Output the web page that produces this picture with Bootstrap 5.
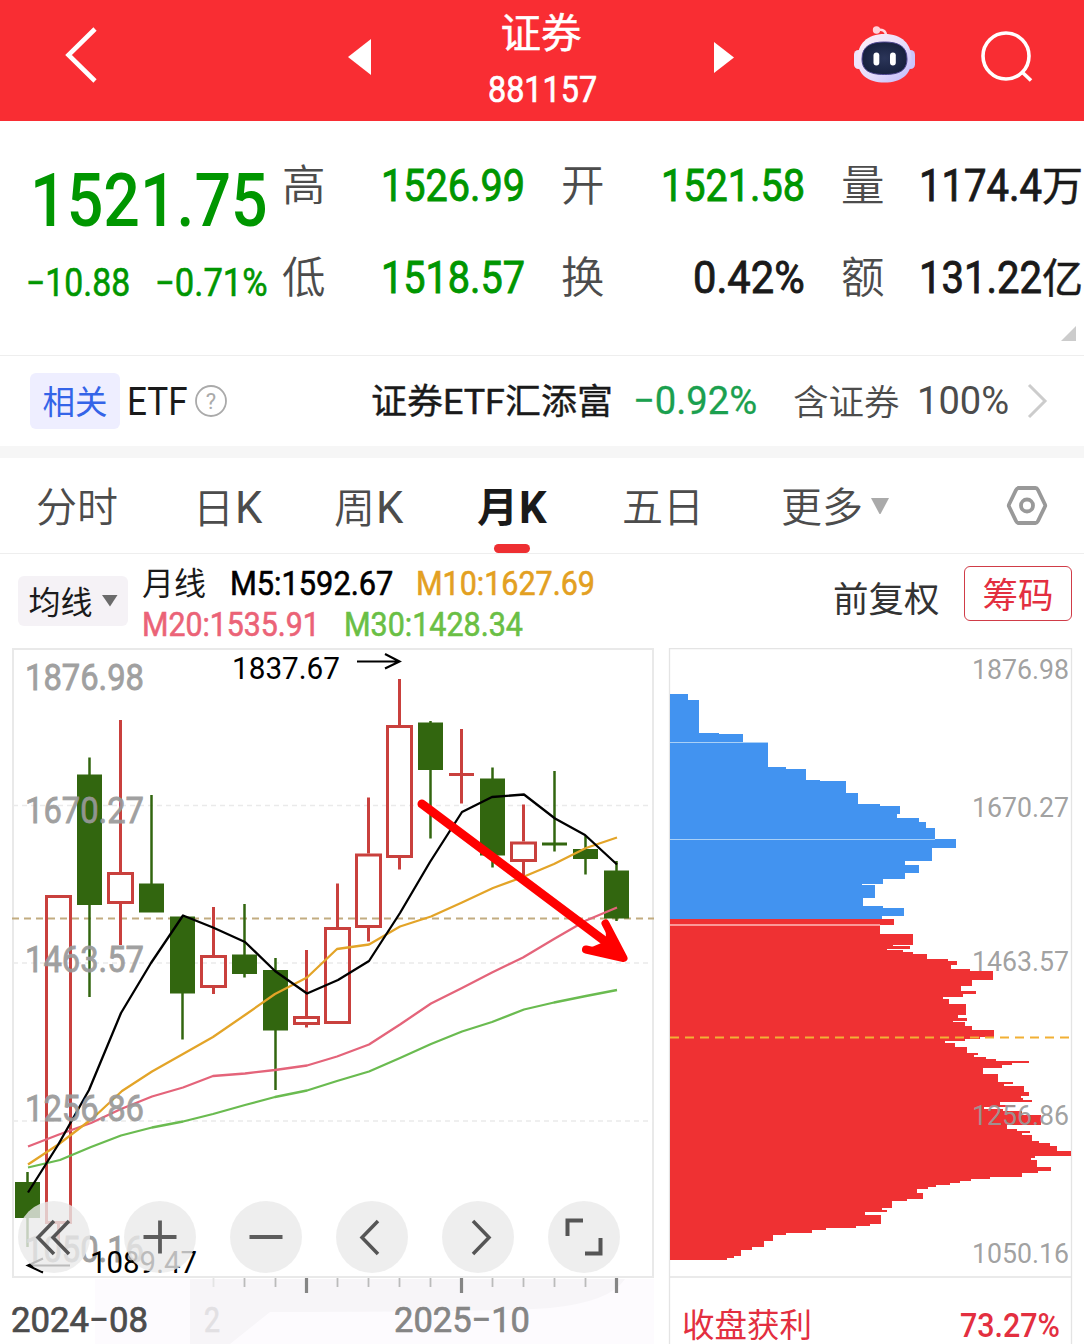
<!DOCTYPE html>
<html lang="zh-CN">
<head>
<meta charset="utf-8">
<meta name="viewport" content="width=device-width, initial-scale=1">
<title>证券 881157</title>
<link href="https://cdn.jsdelivr.net/npm/bootstrap@5.3.0/dist/css/bootstrap.min.css" rel="stylesheet">
<style>
body{font-family:Roboto,"Noto Sans CJK SC",sans-serif;color:#1a1a1a;background:#fff;width:1084px;height:1344px;overflow:hidden;line-height:1}
.topbar{height:121px;background:#f92d33;color:#fff;padding-left:65px}
.topbar svg{flex:none}
.title-box{width:343px;padding-top:13px}
.title-name{font-size:40.5px;line-height:43px;font-weight:400;-webkit-text-stroke:.5px;padding-right:3px}
.title-code{font-size:36.5px;line-height:40px;font-weight:400;-webkit-text-stroke:.7px;margin-top:14px}
.fit{display:inline-block;white-space:nowrap;text-align:left;flex:none}
.fit>span{display:inline-block;transform-origin:0 50%}
.dn{color:#009600}
.quote{height:234px;padding-top:19px}
.price-col{width:282px;padding-left:30px}
.price-big{font-size:75px;line-height:90px;font-weight:500;margin-top:15px}
.price-sub{font-size:38px;line-height:46px;margin-left:-4px;margin-top:15px;-webkit-text-stroke:.6px}
.stat-col{margin-right:36px}
.stat-line{height:92px;font-size:44.6px}
.stat-line .fit{-webkit-text-stroke:.9px}
.stat-key{font-size:43.5px;font-weight:350;color:#4c4c4c;padding-top:2px}
.stat-unit{font-size:41px;padding-top:2px;-webkit-text-stroke:.5px}
.corner{right:8px;bottom:14px}
.etf{height:91px;border-top:1px solid #eee;padding-left:30px;font-size:35.5px}
.rel{width:90px;height:56px;border-radius:6px;background:#eeeeff;color:#3464e8;font-size:32.5px;font-weight:400;padding-top:4px}
.band{height:12px;background:#f6f6f6}
.ktabs{height:96px;border-bottom:1px solid #eee;font-size:41px;color:#4c4c4c;font-weight:350;padding-left:36px}
.ktabs>div{flex:none;padding-top:6px}
.lat-k{font-size:43.5px;font-weight:400;margin-left:1px}
.ktab-on{color:#1a1a1a;font-weight:700}
.ktab-on .lat-k{font-weight:700}
.ktab-on::after{content:"";position:absolute;left:17px;bottom:0;width:36px;height:9px;border-radius:5px;background:#ee2f32}
.legend-row{height:94px;padding-left:18px}
.ma-btn{width:110px;height:50px;border-radius:6px;background:#f5f2f6;font-size:32px;margin-top:22px;padding-top:3px}
.ma-line{height:41px;font-size:33px}
.ma-line .fit{-webkit-text-stroke:.6px}
.adj{font-size:35.5px;line-height:50px;margin-top:21px;width:106px;color:#333;white-space:nowrap}
.chip{width:108px;height:55px;border:1px solid #d03c48;border-radius:6px;color:#e32f40;font-size:35.5px;margin-top:12px;padding-top:6px}
.k-panel{width:660px;height:696px}
.c-panel{width:424px;height:696px}
.k-panel>svg,.c-panel>svg{display:block}
.tools{left:18px;top:553px;gap:34px}
.tool{width:72px;height:72px;background:rgba(234,234,234,.8);border-radius:50%}
svg text{font-family:Roboto,"Noto Sans CJK SC",sans-serif}
.axis-l text{stroke:#999;stroke-width:.8px}
.dates text{stroke:currentColor;stroke-width:.7px;fill:currentColor}
</style>
<script src="https://cdn.jsdelivr.net/npm/bootstrap@5.3.0/dist/js/bootstrap.bundle.min.js"></script>
</head>
<body>
<header class="topbar d-flex">
  <svg width="33" height="121" fill="none" stroke="#fff" stroke-width="4.6"><path d="M30 29L3.500 55L30 81"/></svg>
  <svg width="23" height="121" style="margin-left:250px"><path d="M0 57L23 39V75Z" fill="#fff"/></svg>
  <div class="title-box text-center">
    <div class="title-name">证券</div>
    <div class="title-code"><span class="fit" data-w="109">881157</span></div>
  </div>
  <svg width="20" height="121"><path d="M0 42L20 57.500L0 73Z" fill="#fff"/></svg>
  <svg width="62" height="121" style="margin-left:120px" viewBox="0 0 62 121">
    <defs><linearGradient id="rb" x1="0" y1="0" x2="1" y2="1"><stop offset="0" stop-color="#fff0f6"/><stop offset=".55" stop-color="#e6dcfb"/><stop offset="1" stop-color="#bdb8fa"/></linearGradient>
    <radialGradient id="rf"><stop offset="0" stop-color="#2b3559"/><stop offset="1" stop-color="#18213f"/></radialGradient></defs>
    <path d="M32 36C32 30 28 29.500 24 30" fill="none" stroke="#ffd9e2" stroke-width="2.500"/><circle cx="22.500" cy="30" r="3.700" fill="#ffd3dc"/>
    <rect x="0" y="50" width="9" height="19" rx="4.500" fill="#eee5fd"/><rect x="52" y="50" width="9" height="19" rx="4.500" fill="#cbc5fb"/>
    <path d="M30.500 34C48 34 57.500 44 57.500 59C57.500 75 47 82.500 30.500 82.500S3.500 75 3.500 59C3.500 44 13 34 30.500 34Z" fill="url(#rb)"/>
    <path d="M30.500 42C44 42 53 46 53 59C53 70 46 74.500 30.500 74.500S8 70 8 59C8 46 17 42 30.500 42Z" fill="url(#rf)" stroke="#4c4590" stroke-width="1"/>
    <rect x="19.500" y="52.500" width="5.800" height="13" rx="2.900" fill="#fff"/><rect x="36" y="52.500" width="5.800" height="13" rx="2.900" fill="#fff"/>
  </svg>
  <svg width="54" height="121" style="margin-left:64px" fill="none" stroke="#fff" stroke-width="3.600"><circle cx="26" cy="56" r="23"/><path d="M42 72L51 80.500"/></svg>
</header>

<section class="quote d-flex position-relative">
  <div class="price-col">
    <div class="price-big dn"><span class="fit" data-w="238">1521.75</span></div>
    <div class="price-sub dn d-flex"><span class="fit" data-w="104">−10.88</span><span class="fit" data-w="113" style="margin-left:25px">−0.71%</span></div>
  </div>
  <div class="stat-col" style="width:243px">
    <div class="stat-line d-flex align-items-center justify-content-between"><span class="stat-key">高</span><span class="fit dn" data-w="144">1526.99</span></div>
    <div class="stat-line d-flex align-items-center justify-content-between"><span class="stat-key">低</span><span class="fit dn" data-w="144">1518.57</span></div>
  </div>
  <div class="stat-col" style="width:244px">
    <div class="stat-line d-flex align-items-center justify-content-between"><span class="stat-key">开</span><span class="fit dn" data-w="144">1521.58</span></div>
    <div class="stat-line d-flex align-items-center justify-content-between"><span class="stat-key">换</span><span class="fit" data-w="112">0.42%</span></div>
  </div>
  <div style="width:242px">
    <div class="stat-line d-flex align-items-center justify-content-between"><span class="stat-key">量</span><span class="d-flex align-items-center"><span class="fit" data-w="123">1174.4</span><span class="stat-unit">万</span></span></div>
    <div class="stat-line d-flex align-items-center justify-content-between"><span class="stat-key">额</span><span class="d-flex align-items-center"><span class="fit" data-w="123">131.22</span><span class="stat-unit">亿</span></span></div>
  </div>
  <svg class="corner position-absolute" width="15" height="15"><path d="M15 0V15H0Z" fill="#ccc"/></svg>
</section>

<section class="etf d-flex align-items-center">
  <div class="rel d-flex align-items-center justify-content-center">相关</div>
  <span class="fit" data-w="61" style="margin-left:7px;font-size:38px;padding-top:2px">ETF</span>
  <svg width="32" height="34" style="margin-left:7px"><circle cx="16" cy="17" r="15" fill="none" stroke="#aaa" stroke-width="1.800"/><text x="16" y="24.500" font-size="22" text-anchor="middle" fill="#aaa">?</text></svg>
  <span class="fit" data-w="242" style="margin-left:144px;-webkit-text-stroke:.4px;padding-top:4px">证券ETF汇添富</span>
  <span class="fit" data-w="124" style="margin-left:20px;font-size:38.500px;color:#1ba04f;-webkit-text-stroke:.3px">−0.92%</span>
  <span style="margin-left:36px;color:#4c4c4c;font-weight:350;padding-top:5px">含证券</span>
  <span class="fit" data-w="92" style="margin-left:17px;font-size:38.500px;color:#4c4c4c">100%</span>
  <svg width="22" height="36" style="margin-left:17px" fill="none" stroke="#ccc" stroke-width="3"><path d="M3 2L19 18L3 34"/></svg>
</section>
<div class="band"></div>

<nav class="ktabs d-flex align-items-center">
  <div style="width:157px">分时</div>
  <div style="width:141px">日<span class="lat-k">K</span></div>
  <div style="width:143px">周<span class="lat-k">K</span></div>
  <div class="ktab-on position-relative h-100 d-flex align-items-center" style="width:145px">月<span class="lat-k">K</span></div>
  <div style="width:159px">五日</div>
  <div class="d-flex align-items-center" style="width:225px">更多<svg width="19" height="17" style="margin-left:8px;margin-top:-5px"><path d="M0 0H18L9.500 16H8.500Z" fill="#aaa"/></svg></div>
  <svg width="42" height="42" fill="none" stroke="#999" stroke-width="3.800"><path d="M12.500 3H29.500Q31 3 32 5L39 19.500Q39.500 20.500 39 21.500L32 36Q31 38 29.500 38H12.500Q11 38 10 36L3 21.500Q2.500 20.500 3 19.500L10 5Q11 3 12.500 3Z"/><circle cx="21" cy="20.500" r="6"/></svg>
</nav>

<section class="legend-row d-flex">
  <div class="ma-btn d-flex align-items-center justify-content-center">均线<svg width="16" height="12" style="margin-left:9px;margin-top:-3px"><path d="M0 0H15.500L8 11.500Z" fill="#6b6b6b"/></svg></div>
  <div style="width:705px;margin-left:14px;padding-top:9px">
    <div class="ma-line d-flex align-items-center"><span style="font-size:32px;font-weight:400">月线</span><span class="fit" data-w="163" style="margin-left:24px;color:#000">M5:1592.67</span><span class="fit" data-w="179" style="margin-left:23px;color:#e3a021">M10:1627.69</span></div>
    <div class="ma-line d-flex align-items-center"><span class="fit" data-w="178" style="color:#eb6377">M20:1535.91</span><span class="fit" data-w="179" style="margin-left:24px;color:#6abf45">M30:1428.34</span></div>
  </div>
  <div class="d-flex flex-shrink-0" style="margin-left:-14px">
    <span class="adj">前复权</span>
    <div class="chip d-flex align-items-center justify-content-center" style="margin-left:25px">筹码</div>
  </div>
</section>

<main class="d-flex">
  <div class="k-panel position-relative">
    <svg width="660" height="696" viewBox="0 648 660 696">
      <rect x="12" y="1279" width="642" height="65" fill="#fdfbfe"/>
      <path d="M190 1279H625Q610 1302 550 1308Q500 1312 270 1312L230 1344H190Z" fill="#f7f5f8"/><rect x="12" y="1279" width="83" height="65" fill="#fff"/>
      <rect x="13" y="649" width="640" height="628" fill="none" stroke="#e9e9e9" stroke-width="2"/>
      <g stroke="#eaeaea" stroke-width="1.500" stroke-dasharray="5 4"><path d="M13 805.500H653M13 963H653M13 1121H653"/></g>
      <path d="M12 918.500H654" stroke="#c2ac80" stroke-width="1.800" stroke-dasharray="7 5"/>
      <g id="candles"></g>
      <g fill="none" stroke-width="2.300" stroke-linejoin="round">
        <polyline stroke="#6abb50" points="28,1167.500 60,1160 91,1147 121,1135.500 152,1127.500 183,1121.500 213,1114 245,1105 275,1097 307,1090.500 337,1081 369,1071.500 400,1058 431,1044 462,1031.500 492,1022 524,1009.500 554,1002.500 586,996 617,990"/>
        <polyline stroke="#e4647a" points="28,1146.500 59,1134.500 91,1123 121,1109 152,1096.500 183,1087.500 213,1076 245,1073.500 275,1070 307,1065.500 337,1056.500 369,1044.500 400,1024.500 431,1003.500 462,988 492,972.500 523,957.500 554,939 586,920.500 617,907.500"/>
        <polyline stroke="#e3a428" points="28,1164.500 59,1144 93,1118 122,1091 152,1071.500 183,1054 213,1037 245,1015 275,994 307,977.500 337,949 369,944.500 400,926.500 431,916.500 462,902.500 493,888 523,877 554,864 586,848 617,837.500"/>
        <polyline stroke="#000" points="28,1192.500 58,1145 89,1090 121,1013 151,963 183,915.500 213,927.500 245,942 275,971 307,993.500 338,980 369,961 400,913 430,862 462,812 492,797 524,794.500 555,818.500 585,835 617,864.500"/>
      </g>
      <g class="axis-l" font-size="36" fill="#999" opacity=".93">
        <text x="25" y="690" textLength="119" lengthAdjust="spacingAndGlyphs">1876.98</text>
        <text x="25" y="823" textLength="119" lengthAdjust="spacingAndGlyphs">1670.27</text>
        <text x="25" y="972" textLength="119" lengthAdjust="spacingAndGlyphs">1463.57</text>
        <text x="25" y="1121" textLength="119" lengthAdjust="spacingAndGlyphs">1256.86</text>
        <text x="25" y="1262" textLength="119" lengthAdjust="spacingAndGlyphs">1050.16</text>
      </g>
      <g font-size="31" fill="#000">
        <text x="232" y="679" textLength="108" lengthAdjust="spacingAndGlyphs">1837.67</text>
        <text x="90" y="1273" textLength="107" lengthAdjust="spacingAndGlyphs">1089.47</text>
      </g>
      <g fill="none" stroke="#000" stroke-width="2.200"><path d="M357 661.500H399M385 654L399.500 661.500L385 668.500"/><path d="M70 1265.500H29M43 1258.500L28 1265.500L43 1272.500"/></g>
      <g stroke="#f00" stroke-linecap="round" stroke-linejoin="round" fill="#f00"><path d="M422 804L610 945" stroke-width="9"/><path d="M605.500 923.500L623.500 958L586 949.500" fill="none" stroke-width="8"/><path d="M605.500 923L624 958L586 949.500L606 941Z" stroke="none"/></g>
      <g id="ticks"></g>
      <g class="dates" font-size="35.500">
        <text x="11" y="1332" textLength="137" lengthAdjust="spacingAndGlyphs" color="#4c4c4c">2024−08</text>
        <text x="204" y="1332" textLength="16" lengthAdjust="spacingAndGlyphs" color="#e2e0e3">2</text>
        <text x="394" y="1332" textLength="136" lengthAdjust="spacingAndGlyphs" color="#858585">2025−10</text>
      </g>
    </svg>
    <div class="tools position-absolute d-flex">
      <div class="tool"><svg width="72" height="72" fill="none" stroke="#555" stroke-width="3.500"><path d="M36 20L20 36.500L36 53M51 20L35 36.500L51 53"/></svg></div>
      <div class="tool"><svg width="72" height="72" fill="none" stroke="#5c5c5c" stroke-width="3.800"><path d="M19.500 36H52.500M36 19.500V52.500"/></svg></div>
      <div class="tool"><svg width="72" height="72" fill="none" stroke="#5c5c5c" stroke-width="3.800"><path d="M19.500 36H52.500"/></svg></div>
      <div class="tool"><svg width="72" height="72" fill="none" stroke="#555" stroke-width="3.500"><path d="M42 20L26 36.500L42 53"/></svg></div>
      <div class="tool"><svg width="72" height="72" fill="none" stroke="#555" stroke-width="3.500"><path d="M31 20L47 36.500L31 53"/></svg></div>
      <div class="tool"><svg width="72" height="72" fill="none" stroke="#555" stroke-width="4"><path d="M35 19.500H19.500V35M37 52.500H52.500V37"/></svg></div>
    </div>
  </div>
  <div class="c-panel">
    <svg width="424" height="696" viewBox="660 648 424 696">
      <path d="M669.500 1344V648.500H1071.500V1344M670 1277H1071" fill="none" stroke="#e4e4e4" stroke-width="1.300"/>
      <g id="chips" shape-rendering="crispEdges"></g>
      <path d="M670 742.500H768M670 839.500H935" stroke="#a9d0f7" stroke-width="1"/><path d="M670 925H880" stroke="#fbb" stroke-width="1.300"/>
      <path d="M670 1037.500H1071" stroke="#f2b035" stroke-width="2.200" stroke-dasharray="9 6"/>
      <g font-size="28.500" fill="#999" fill-opacity=".93">
        <text x="972" y="679" textLength="97" lengthAdjust="spacingAndGlyphs">1876.98</text>
        <text x="972" y="817" textLength="97" lengthAdjust="spacingAndGlyphs">1670.27</text>
        <text x="972" y="971" textLength="97" lengthAdjust="spacingAndGlyphs">1463.57</text>
        <text x="972" y="1125" textLength="97" lengthAdjust="spacingAndGlyphs">1256.86</text>
        <text x="972" y="1263" textLength="97" lengthAdjust="spacingAndGlyphs">1050.16</text>
      </g>
      <g fill="#e32f40"><text x="682" y="1337" font-size="32.500">收盘获利</text><text x="960" y="1337" font-size="33" font-weight="500" textLength="100" lengthAdjust="spacingAndGlyphs">73.27%</text></g>
    </svg>
  </div>
</main>

<script>
// Condense numeric labels to the width given in data-w
function fitAll(){
  document.querySelectorAll('.fit').forEach(function(el){
    if(!el.firstElementChild){el.innerHTML='<span>'+el.textContent+'</span>';}
    var s=el.firstElementChild,w=+el.dataset.w;
    el.style.width='auto';s.style.transform='none';
    var n=s.offsetWidth;
    el.style.width=w+'px';s.style.transform='scaleX('+(w/n)+')';
  });
}
fitAll();

// Candles: direction, body top, body bottom, high, low
var K=[['g',1182,1218,1172,1247],['r',895,1224,895,1245],['g',774.5,905,757.5,997],['r',872,904,720,945],['g',883.5,912.5,795,912],['g',916.5,993.5,916,1039.5],['r',955,988,907,994],['g',954.5,974,904,977.5],['g',970,1030.5,958,1090],['r',1016,1025,950,1027.5],['r',927,1024,883.5,1024],['r',853.5,928,797.5,941.5],['r',725,858,679,869.5],['g',722.5,770,721,838.5],['r',773,776,729,803.5],['g',778.5,855.5,767.5,867.5],['r',841.5,862,804.5,877],['g',842.5,845.5,771,851.5],['g',849,859,836,874.5],['g',870.5,918.5,861,921]];
var h='';
K.forEach(function(k,i){
  var x=27.5+31*i,c=k[0]=='g'?'#32660f':'#c9403d',w=k[0]=='g'?2.5:3;
  if(k[0]=='g'||k[2]-k[1]<4){
    h+='<path d="M'+x+' '+k[3]+'V'+k[4]+'" stroke="'+c+'" stroke-width="'+w+'"/><rect x="'+(x-12.5)+'" y="'+k[1]+'" width="25" height="'+(k[2]-k[1])+'" fill="'+c+'"/>';
  }else{
    h+='<path d="M'+x+' '+k[3]+'V'+k[1]+'M'+x+' '+k[2]+'V'+k[4]+'" stroke="'+c+'" stroke-width="3"/><rect x="'+(x-12)+'" y="'+(k[1]+1.5)+'" width="24" height="'+(k[2]-k[1]-3)+'" fill="none" stroke="'+c+'" stroke-width="3"/>';
  }
});
document.getElementById('candles').innerHTML=h;

h='';
for(var i=6;i<20;i++){
  var big=(i-9)%5==0&&i>=9,x=27.5+31*i;
  h+='<path d="M'+x+' 1278V'+(big?1293:1287)+'" stroke="'+(big?'#858585':i==6?'#e4e4e4':'#bbb')+'" stroke-width="'+(big?3.2:1.8)+'"/>';
}
document.getElementById('ticks').innerHTML=h;

// Chip distribution: top edge and right edge of every step, above and below the last price
var UP=[694,687.5,700,699,732.5,718.5,734,743,742,768,767,786,769,806,779.5,820,781,846,793,857.5,803.5,880,805.5,899.5,814,896.5,818,919,822,926,828,935,839,956,848,931.5,860.5,905,864.5,918.5,873,904.5,879,883,883.5,862,885,875,898,863,906,883,908,903.5,916,882];
var LOW=[918.5,894,925,880,934,913,944.5,893,946,910,948.5,887,950,903,952,913,954,926.5,958.5,948,961,957,965,950.5,969,970,970.5,993,979.5,972,985.5,960.5,991,976,994,963,997,942.5,999,949,1003.5,966,1014.5,958,1018,967,1020.5,953,1022,965,1026,972,1030,993.5,1037,980,1039,965,1041,945,1043,955,1047,967,1053,978,1055,974,1057,986,1059,996,1061,1029,1063,1012,1065,1002,1067.5,983,1074,997.5,1082,1012.5,1084,1004,1086,1023.5,1092,1029,1096,1021,1098,1023,1100,1032,1102,1000,1104.5,1015,1106.5,984,1109,1003,1111,1022,1115,1041,1125,1006.5,1129,1017,1131,1029.5,1133,1022,1135,1032,1141,1039,1143,1050,1146,1057,1151,1071,1156,1035,1158,1031,1160,1037,1167,1051,1171,1038,1173,1022,1177,990,1179,971,1181,960,1183,950,1185,936,1187,928,1189,917,1193,923,1199,907,1201,892,1207.5,882,1210,887,1212,865,1215,880.5,1224,870,1226,856,1228,826,1230,812,1233,786,1235,773,1241,763.5,1247,752,1250,741,1256,734,1258,727];
function steps(a,bottom){
  var d='M670 '+a[0];
  for(var i=0;i<a.length;i+=2){d+='V'+a[i]+'H'+a[i+1];}
  return d+'V'+bottom+'H670Z';
}
document.getElementById('chips').innerHTML='<path fill="#4293f0" d="'+steps(UP,918.5)+'"/><path fill="#ef3133" d="'+steps(LOW,1260)+'"/>';
</script>
</body>
</html>
